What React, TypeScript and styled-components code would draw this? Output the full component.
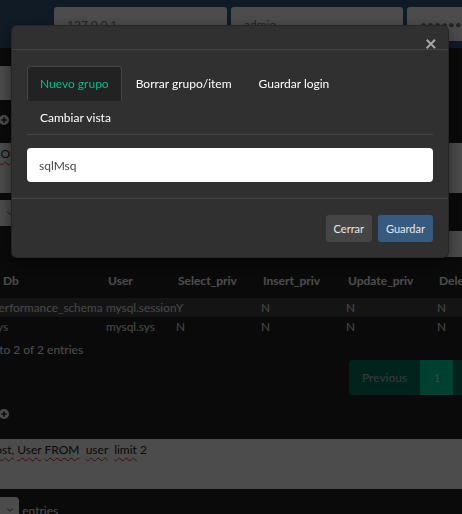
import React from "react"
import styled, { createGlobalStyle } from "styled-components"
import { ChevronDown } from "lucide-react"

const GlobalStyle = createGlobalStyle`
  * { box-sizing: border-box; }
  html, body {
    margin: 0;
    padding: 0;
    width: 462px;
    height: 514px;
    overflow: hidden;
    background: #222;
  }
  body {
    font-family: Lato, "Liberation Sans", sans-serif;
    font-size: 12px;
    color: #fff;
  }
`

const Navbar = styled.div`
  height: 48px;
  background: #375a7f;
  display: flex;
  gap: 4px;
  padding: 7px 0 0 54px;
  overflow: hidden;
`

const NavInput = styled.input<{ $w: number }>`
  flex: none;
  width: ${(p) => p.$w}px;
  min-width: 0;
  height: 34px;
  border: none;
  border-radius: 3px;
  background: #fff;
  color: #777;
  font: 12px Lato, sans-serif;
  padding: 0 13px;
  outline: none;
`

// page is scrolled sideways, so the left part of the content is off screen
const Main = styled.div`
  margin-left: -74px;
  width: 620px;
  padding-top: 18px;
  display: flex;
  flex-direction: column;
`

const WideField = styled.div`
  width: 300px;
  height: 34px;
  background: #fff;
  border-radius: 4px;
`

const IconRow = styled.div<{ $top: number }>`
  margin-top: ${(p) => p.$top}px;
  padding-left: 73px;
  height: 10px;
  display: flex;
`

const QueryBox = styled.div<{ $top: number }>`
  margin-top: ${(p) => p.$top}px;
  height: 50px;
  background: #fff;
  color: #222;
  padding: 1px 12px 0 16px;
  line-height: 20px;
  font-size: 12px;
  white-space: pre;
  overflow: hidden;
`

const Misspelled = styled.span`
  text-decoration: underline wavy #e02020;
  text-decoration-skip-ink: none;
  text-underline-offset: 3px;
  text-decoration-thickness: 1px;
`

const LengthRow = styled.div<{ $top: number }>`
  margin-top: ${(p) => p.$top}px;
  height: 26px;
  display: flex;
  align-items: center;
  gap: 3px;
  color: #fff;
`

const LengthSelect = styled.div`
  width: 61px;
  height: 26px;
  background: #fff;
  border-radius: 4px;
  color: #222;
  display: flex;
  align-items: center;
  justify-content: space-between;
  padding: 0 4px 0 8px;
`

const FilterRow = styled.div`
  margin-top: 5px;
  height: 26px;
  display: flex;
  justify-content: flex-end;
  align-items: center;
  gap: 6px;
`

const FilterInput = styled.div`
  width: 200px;
  height: 26px;
  background: #fff;
  border-radius: 4px;
`

const Table = styled.table`
  margin-top: 10px;
  width: 593px;
  table-layout: fixed;
  border-collapse: collapse;
`

const Th = styled.th<{ $pad?: number }>`
  text-align: left;
  font-weight: bold;
  padding: 4px 0 7px ${(p) => p.$pad ?? 10}px;
  line-height: 20px;
  white-space: nowrap;
`

const Tr = styled.tr<{ $odd?: boolean }>`
  background: ${(p) => (p.$odd ? "#444" : "transparent")};
`

const Td = styled.td`
  padding: 0 0 0 8px;
  line-height: 19px;
  font-size: 11.8px;
  white-space: nowrap;
  color: #eee;
`

const Info = styled.div`
  margin-top: 4px;
  padding-left: 15px;
  line-height: 20px;
`

const Pagination = styled.div`
  display: flex;
  padding-left: 423px;
`

const PageItem = styled.div<{ $active?: boolean; $first?: boolean }>`
  height: 35px;
  padding: 0 13px;
  display: flex;
  align-items: center;
  background: ${(p) => (p.$active ? "#00d8a4" : "#00795a")};
  color: ${(p) => (p.$active ? "#ddd" : "#bcc4c0")};
  border-radius: ${(p) => (p.$first ? "4px 0 0 4px" : "0")};
`

const Backdrop = styled.div`
  position: fixed;
  inset: 0;
  background: rgba(0, 0, 0, 0.7);
`

const ModalLayer = styled.div`
  position: fixed;
  inset: 0;
  padding: 25px 0 0 11px;
`

const Dialog = styled.div`
  width: 438px;
  background: #303030;
  border: 1px solid rgba(0, 0, 0, 0.2);
  border-radius: 6px;
  box-shadow: 0 5px 15px rgba(0, 0, 0, 0.5);
`

const ModalHeader = styled.div`
  height: 24px;
  border-bottom: 1px solid #464545;
  display: flex;
  justify-content: flex-end;
  align-items: flex-end;
  padding: 0 11px;
`

const Close = styled.button`
  background: none;
  border: 0;
  padding: 0;
  margin-bottom: -4px;
  color: #a8a8a8;
  font: bold 21px/1 Lato, sans-serif;
  cursor: pointer;
`

const ModalBody = styled.div`
  padding: 16px 15px;
`

const Tabs = styled.ul`
  list-style: none;
  margin: 0;
  padding: 0;
  display: flex;
  flex-wrap: wrap;
  border-bottom: 1px solid #464545;
`

const Tab = styled.li<{ $active?: boolean }>`
  margin: 0 1px -1px 0;
  padding: 7px 12px;
  line-height: 19px;
  font-size: 12px;
  border: 1px solid ${(p) => (p.$active ? "#464545" : "transparent")};
  border-bottom-color: transparent;
  border-radius: 4px 4px 0 0;
  background: ${(p) => (p.$active ? "#222" : "transparent")};
  color: ${(p) => (p.$active ? "#00bc8c" : "#fff")};
  cursor: pointer;
`

const NameInput = styled.input`
  display: block;
  margin-top: 13px;
  width: 100%;
  height: 34px;
  border: none;
  border-radius: 4px;
  background: #fff;
  color: #464545;
  caret-color: #222;
  font: 12px Lato, sans-serif;
  padding: 0 12px;
  outline: none;
`

const ModalFooter = styled.div`
  border-top: 1px solid #464545;
  padding: 16px 15px 15px;
  display: flex;
  justify-content: flex-end;
  gap: 6px;
`

const Button = styled.button<{ $primary?: boolean }>`
  height: 27px;
  padding: 0 8px;
  border: none;
  border-radius: 3px;
  background: ${(p) => (p.$primary ? "#375a7f" : "#464545")};
  color: #e8e8e8;
  font: 11px Lato, sans-serif;
  cursor: pointer;
`

const PlusSign = () => (
  <svg width="10" height="10" viewBox="0 0 10 10">
    <circle cx="5" cy="5" r="5" fill="#fff" />
    <path d="M5 2.3v5.4M2.3 5h5.4" stroke="#222" strokeWidth="1.6" />
  </svg>
)

const rows = [
  ["localhost", "performance_schema", "mysql.session", "Y", "N", "N", "N"],
  ["localhost", "sys", "mysql.sys", "N", "N", "N", "N"],
]

export default function App() {
  return (
    <>
      <GlobalStyle />
      <Navbar>
        <NavInput $w={173} readOnly value="127.0.0.1" />
        <NavInput $w={172} readOnly value="admin" />
        <NavInput $w={180} readOnly type="password" value="secret123" />
      </Navbar>
      <Main>
        <WideField />
        <IconRow $top={15}>
          <PlusSign />
        </IconRow>
        <QueryBox $top={18}>
          <Misspelled>SELECT</Misspelled> <Misspelled>FROM</Misspelled>{"  "}
          <Misspelled>db</Misspelled>{"  "}<Misspelled>limit</Misspelled> 2
        </QueryBox>
        <LengthRow $top={7}>
          Show
          <LengthSelect>
            10 <ChevronDown size={10} color="#222" />
          </LengthSelect>
          entries
        </LengthRow>
        <FilterRow>
          Search:
          <FilterInput />
        </FilterRow>
        <Table>
          <colgroup>
            <col style={{ width: 58 }} />
            <col style={{ width: 114 }} />
            <col style={{ width: 70 }} />
            <col style={{ width: 85 }} />
            <col style={{ width: 85 }} />
            <col style={{ width: 91 }} />
            <col style={{ width: 90 }} />
          </colgroup>
          <thead>
            <tr>
              <Th>Host</Th>
              <Th $pad={19}>Db</Th>
              <Th>User</Th>
              <Th>Select_priv</Th>
              <Th>Insert_priv</Th>
              <Th>Update_priv</Th>
              <Th>Delete_priv</Th>
            </tr>
          </thead>
          <tbody>
            {rows.map((r, i) => (
              <Tr key={i} $odd={i === 0}>
                {r.map((c, j) => (
                  <Td key={j}>{c}</Td>
                ))}
              </Tr>
            ))}
          </tbody>
        </Table>
        <Info>Showing 1 to 2 of 2 entries</Info>
        <Pagination>
          <PageItem $first>Previous</PageItem>
          <PageItem $active>1</PageItem>
          <PageItem>Next</PageItem>
        </Pagination>
        <IconRow $top={14}>
          <PlusSign />
        </IconRow>
        <QueryBox $top={20}>
          <Misspelled>SELECT</Misspelled> <Misspelled>Host,</Misspelled> <Misspelled>User</Misspelled>{" "}
          <Misspelled>FROM</Misspelled>{"  "}<Misspelled>user</Misspelled>{"  "}<Misspelled>limit</Misspelled> 2
        </QueryBox>
        <LengthRow $top={8}>
          Show
          <LengthSelect>
            10 <ChevronDown size={10} color="#222" />
          </LengthSelect>
          entries
        </LengthRow>
      </Main>

      <Backdrop />
      <ModalLayer>
        <Dialog>
          <ModalHeader>
            <Close>×</Close>
          </ModalHeader>
          <ModalBody>
            <Tabs>
              <Tab $active>Nuevo grupo</Tab>
              <Tab>Borrar grupo/item</Tab>
              <Tab>Guardar login</Tab>
              <Tab>Cambiar vista</Tab>
            </Tabs>
            <NameInput autoFocus defaultValue="sqlMsq" />
          </ModalBody>
          <ModalFooter>
            <Button>Cerrar</Button>
            <Button $primary>Guardar</Button>
          </ModalFooter>
        </Dialog>
      </ModalLayer>
    </>
  )
}
